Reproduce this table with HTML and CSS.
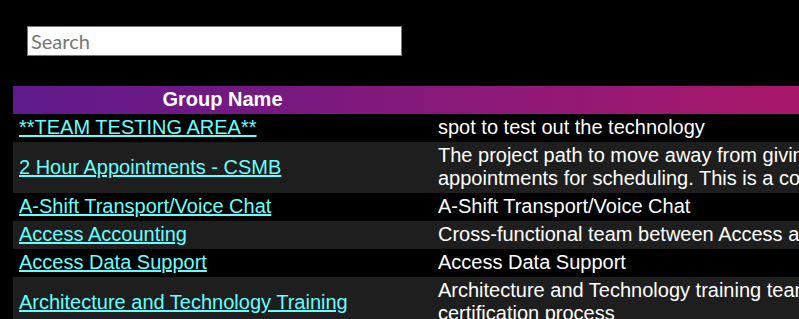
FILE: index.html
```html
<!DOCTYPE html>
<html lang="en">
<head>
<meta charset="utf-8">
<title>Groups</title>
<link rel="stylesheet" href="styles.css">
</head>
<body>
<div class="search">
  <input class="search-input" type="text" placeholder="Search" autofocus>
</div>
<table class="groups">
  <colgroup>
    <col class="col-name">
    <col class="col-desc">
  </colgroup>
  <thead>
    <tr class="head-row">
      <th>Group Name</th>
      <th>Description</th>
    </tr>
  </thead>
  <tbody>
    <tr>
      <td><a href="#">**TEAM TESTING AREA**</a></td>
      <td>spot to test out the technology</td>
    </tr>
    <tr>
      <td><a href="#">2 Hour Appointments - CSMB</a></td>
      <td>The project path to move away from giving customers 4 hour windows and toward 2 hour<br>appointments for scheduling. This is a collaborative effort across teams.</td>
    </tr>
    <tr>
      <td><a href="#">A-Shift Transport/Voice Chat</a></td>
      <td>A-Shift Transport/Voice Chat</td>
    </tr>
    <tr>
      <td><a href="#">Access Accounting</a></td>
      <td>Cross-functional team between Access and Accounting</td>
    </tr>
    <tr>
      <td><a href="#">Access Data Support</a></td>
      <td>Access Data Support</td>
    </tr>
    <tr>
      <td><a href="#">Architecture and Technology Training</a></td>
      <td>Architecture and Technology training team for the technology training and<br>certification process</td>
    </tr>
    <tr>
      <td><a href="#">Asset Management</a></td>
      <td>Asset Management</td>
    </tr>
  </tbody>
</table>
</body>
</html>
```

FILE: styles.css
```css
html {
  overflow: hidden;
}

body {
  margin: 0;
  background: #000;
  color: #fff;
  font-family: "Liberation Sans", Arial, sans-serif;
}

.search {
  padding: 26px 0 0 27px;
}

.search-input {
  display: block;
  box-sizing: border-box;
  width: 375px;
  height: 30px;
  margin: 0;
  padding: 0 2px 0 3px;
  border: 1px solid #767676;
  background: #fff;
  color: #000;
  font-family: Lato, "Open Sans", sans-serif;
  font-size: 20px;
  outline: none;
}

.search-input::placeholder {
  color: #767676;
}

.groups {
  margin: 30px 0 0 13px;
  border-collapse: collapse;
  table-layout: fixed;
  width: 1319px;
  font-size: 20px;
  line-height: 23px;
}

.col-name {
  width: 419px;
}

.col-desc {
  width: 900px;
}

.head-row {
  background: linear-gradient(to right, #5e1a8c 0px, #a9186a 786px, #d0185a 1319px);
}

.groups th {
  padding: 2px 6px 3px;
  font-weight: bold;
  text-align: center;
  color: #fff;
}

.groups td {
  padding: 2px 6px 3px;
  text-align: left;
  vertical-align: middle;
  white-space: nowrap;
}

.groups tbody tr:nth-child(even) {
  background: #1e1e1e;
}

.groups a {
  color: #66ffff;
  text-decoration: underline;
}
```
